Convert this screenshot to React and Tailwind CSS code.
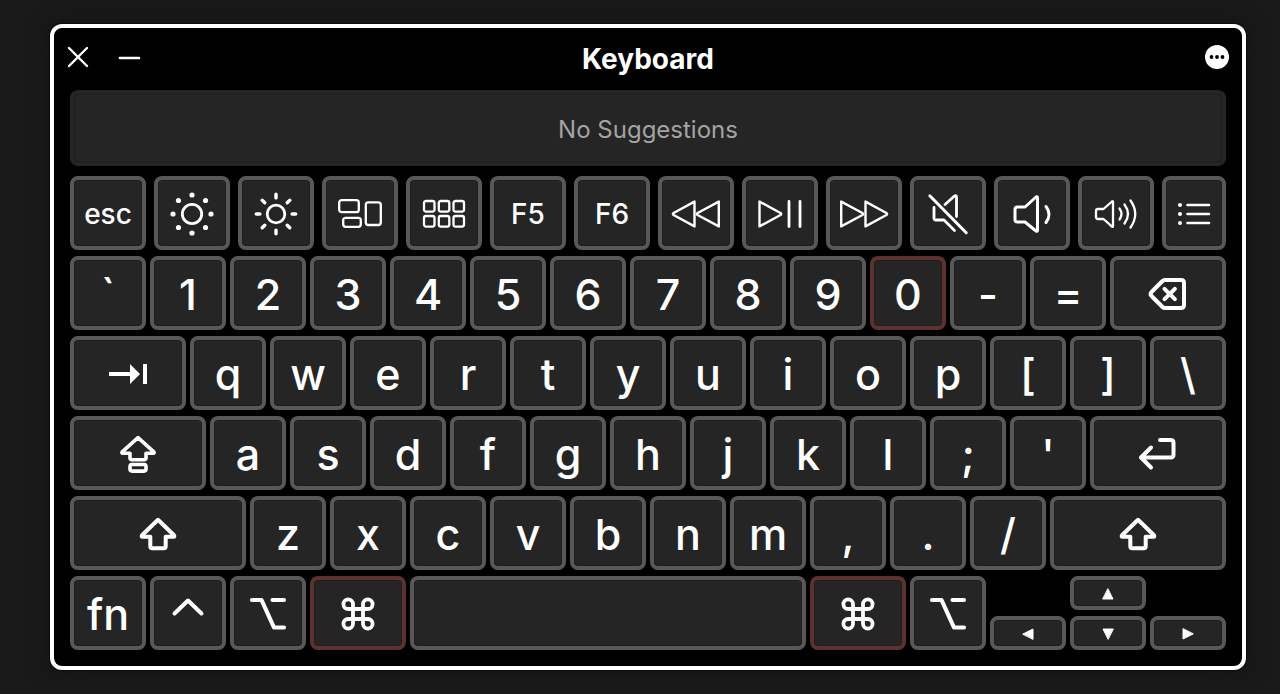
import React from 'react';
import clsx from 'clsx';

// Every icon is drawn in the pixel box of the key face it sits on
const Icon = ({ w, h, stroke = 2.3, className, children }) => (
  <svg
    width={w}
    height={h}
    viewBox={`0 0 ${w} ${h}`}
    fill="none"
    stroke="currentColor"
    strokeWidth={stroke}
    strokeLinecap="round"
    strokeLinejoin="round"
    aria-hidden="true"
    className={clsx('block shrink-0 overflow-visible', className)}
  >
    {children}
  </svg>
);

const BrightnessDownIcon = () => (
  <Icon w={44} h={44} stroke={2.8}>
    <circle cx="22" cy="22" r="9.7" />
    <g fill="currentColor" stroke="none">
      <circle cx="22" cy="3" r="2.6" />
      <circle cx="22" cy="41" r="2.6" />
      <circle cx="3" cy="22" r="2.6" />
      <circle cx="41" cy="22" r="2.6" />
      <circle cx="8.5" cy="8.5" r="2.6" />
      <circle cx="35.5" cy="8.5" r="2.6" />
      <circle cx="8.5" cy="35.5" r="2.6" />
      <circle cx="35.5" cy="35.5" r="2.6" />
    </g>
  </Icon>
);

const BrightnessUpIcon = () => (
  <Icon w={44} h={44} stroke={2.8}>
    <circle cx="22" cy="22" r="8.8" />
    <path
      strokeWidth="3.4"
      d="M22 2.3v3.6M22 38.1v3.6M2.3 22h3.6M38.1 22h3.6M8.2 8.2l2.6 2.6M33.2 33.2l2.6 2.6M8.2 35.8l2.6-2.6M33.2 10.8l2.6-2.6"
    />
  </Icon>
);

const MissionControlIcon = () => (
  <Icon w={44} h={30}>
    <rect x="1.2" y="1.2" width="19.6" height="12" rx="2.5" />
    <rect x="5.2" y="18.8" width="17.6" height="9" rx="2.5" />
    <rect x="27.8" y="3.4" width="15" height="22.6" rx="2.5" />
  </Icon>
);

const LaunchpadIcon = () => (
  <Icon w={42} h={28}>
    {[1, 15.8, 30.5].map((x) => (
      <g key={x}>
        <rect x={x} y="1" width="10.5" height="10.6" rx="2" />
        <rect x={x} y="16" width="10.5" height="10.6" rx="2" />
      </g>
    ))}
  </Icon>
);

const RewindIcon = () => (
  <Icon w={48} h={28} stroke={2.4}>
    <path d="M22.5 1.6v24.8L1.6 15c-.9-.5-.9-1.5 0-2z" />
    <path d="M46.8 1.6v24.8L25.6 15c-.9-.5-.9-1.5 0-2z" />
  </Icon>
);

const PlayPauseIcon = () => (
  <Icon w={44} h={28} stroke={2.4}>
    <path d="M1.5 1.6v24.8L22.5 15c.9-.5.9-1.5 0-2z" />
    <path d="M31 1.5v25M42 1.5v25" strokeWidth="2.8" />
  </Icon>
);

const ForwardIcon = () => (
  <Icon w={48} h={28} stroke={2.4}>
    <path d="M1.2 1.6v24.8L22.4 15c.9-.5.9-1.5 0-2z" />
    <path d="M25.5 1.6v24.8L46.4 15c.9-.5.9-1.5 0-2z" />
  </Icon>
);

const MuteIcon = () => (
  <Icon w={40} h={40} stroke={2.8}>
    <path d="M1.8 1.8l36.4 37" strokeWidth="3" />
    <path d="M6 13.5v10.5q0 2 2 2h8L26.5 36.5" />
    <path d="M17 10.5L26.500 2q2-1 2 1V22.500" />
  </Icon>
);

const VolumeDownIcon = () => (
  <Icon w={38} h={40} stroke={3}>
    <path d="M4.5 13H12L23 3q1.500-1 1.500 1v32q0 2-1.500 1L12 28H4.500q-2.500 0-2.500-2.500v-10Q2 13 4.500 13z" />
    <path d="M33 12.500q6 8 0 16" />
  </Icon>
);

const VolumeUpIcon = () => (
  <Icon w={42} h={30}>
    <path d="M3 10h5.500L17 2.500q1-.7 1 .6v24q0 1.300-1 .6L8.500 20H3q-2 0-2-2v-6Q1 10 3 10z" />
    <path d="M24.500 9.500q4 5.500 0 11M29.500 5.500q7 9.500 0 19M35.500 1.500q9.500 13.500 0 27" />
  </Icon>
);

const ListIcon = () => (
  <Icon w={32} h={24} stroke={2.6}>
    <path d="M9.500 3h21.500M9.500 12h21.500M9.500 21h21.500" />
    <g fill="currentColor" stroke="none">
      <circle cx="2" cy="3" r="2" />
      <circle cx="2" cy="12" r="2" />
      <circle cx="2" cy="21" r="2" />
    </g>
  </Icon>
);

const DeleteIcon = () => (
  <Icon w={40} h={34} stroke={4}>
    <path d="M17 3h16q3 0 3 3v22q0 3-3 3H17q-1.500 0-2.500-1L3.500 19q-1.800-2 0-4L14.500 4q1-1 2.500-1z" />
    <path d="M16.500 11.800l10.400 10.400M26.900 11.800l-10.400 10.400" />
  </Icon>
);

const TabIcon = () => (
  <Icon w={38} h={20}>
    <path d="M0 8h21V0l10 10-10 10v-8H0zM34 0h4v20h-4z" fill="currentColor" stroke="none" />
  </Icon>
);

const CapsLockIcon = () => (
  <Icon w={38} h={38} stroke={3.6}>
    <path d="M19 2.600L3.200 16.800q-.9 1.500 .6 1.500H11v4.400q0 2 2 2h12q2 0 2-2v-4.400h7.200q1.500 0 .6-1.500z" />
    <rect x="11" y="29.500" width="16" height="6.600" rx="2" />
  </Icon>
);

const ShiftIcon = () => (
  <Icon w={38} h={34} stroke={4}>
    <path d="M19 2.800L3 18.300q-.9 1.500 .6 1.500H11.300v9.500q0 2 2 2h11.400q2 0 2-2v-9.500h7.700q1.500 0 .6-1.500z" />
  </Icon>
);

const ReturnIcon = () => (
  <Icon w={40} h={34} stroke={4}>
    <path d="M22 3H32.500q3 0 3 3v11.500q0 3-3 3H3M13 10.500L3 20.500l10 10" />
  </Icon>
);

const ControlIcon = () => (
  <Icon w={32} h={18} stroke={4}>
    <path d="M2.500 15.500L16 2.500l13.500 13" />
  </Icon>
);

const OptionIcon = () => (
  <Icon w={36} h={34} stroke={4.2}>
    <path d="M2 3h9.500L24 30.500h10M22.500 3h11.500" />
  </Icon>
);

const CommandIcon = () => (
  <Icon w={34} h={34} stroke={3.8}>
    <path d="M12 12V7.200a4.800 4.800 0 1 0-4.800 4.800h19.600a4.800 4.800 0 1 0-4.800-4.800v19.600a4.800 4.800 0 1 0 4.800-4.800H7.200a4.800 4.800 0 1 0 4.800 4.800z" />
  </Icon>
);

const ArrowIcon = ({ className }) => (
  <Icon w={12} h={12} stroke={1} className={className}>
    <path d="M6 1l5 10H1z" fill="currentColor" />
  </Icon>
);

const functionKeys = [
  { name: 'esc', face: 'esc' },
  { name: 'Brightness down', face: <BrightnessDownIcon /> },
  { name: 'Brightness up', face: <BrightnessUpIcon /> },
  { name: 'Mission Control', face: <MissionControlIcon /> },
  { name: 'Launchpad', face: <LaunchpadIcon /> },
  { name: 'F5', face: 'F5' },
  { name: 'F6', face: 'F6' },
  { name: 'Rewind', face: <RewindIcon /> },
  { name: 'Play or pause', face: <PlayPauseIcon /> },
  { name: 'Fast forward', face: <ForwardIcon /> },
  { name: 'Mute', face: <MuteIcon /> },
  { name: 'Volume down', face: <VolumeDownIcon /> },
  { name: 'Volume up', face: <VolumeUpIcon /> },
  { name: 'Key list', face: <ListIcon /> },
];

const chars = (text) => text.split('').map((c) => ({ name: c, face: c, hot: c === '0' }));

// A plain key spans 4 of the 58 columns
const rows = [
  [...chars('`1234567890-='), { name: 'Delete', face: <DeleteIcon />, size: 'col-span-6' }],
  [{ name: 'Tab', face: <TabIcon />, size: 'col-span-6' }, ...chars('qwertyuiop[]\\')],
  [
    { name: 'Caps Lock', face: <CapsLockIcon />, size: 'col-span-7' },
    ...chars("asdfghjkl;'"),
    { name: 'Return', face: <ReturnIcon />, size: 'col-span-7' },
  ],
  [
    { name: 'Left Shift', face: <ShiftIcon />, size: 'col-span-9' },
    ...chars('zxcvbnm,./'),
    { name: 'Right Shift', face: <ShiftIcon />, size: 'col-span-9' },
  ],
];

const bottomRow = [
  { name: 'fn', face: 'fn' },
  { name: 'Control', face: <ControlIcon />, pad: 'pb-3' },
  { name: 'Left Option', face: <OptionIcon /> },
  { name: 'Left Command', face: <CommandIcon />, size: 'col-span-5', hot: true },
  { name: 'Space', face: null, size: 'col-span-20' },
  { name: 'Right Command', face: <CommandIcon />, size: 'col-span-5', hot: true },
  { name: 'Right Option', face: <OptionIcon /> },
];

const Key = ({ name, face, size = 'col-span-4', height = 'h-[74px]', text = 'text-[43px]', pad = 'pt-0.5', hot }) => (
  <button
    type="button"
    aria-label={name}
    className={clsx(
      'flex min-w-0 items-center justify-center rounded-lg border-4 bg-[#252525] font-medium leading-none text-white shadow-[inset_0_0_0_1px_#1e1e1e]',
      hot ? 'border-[#5e3131]' : 'border-[#585858]',
      pad,
      size,
      height,
      text
    )}
  >
    {face}
  </button>
);

const Row = ({ children }) => (
  <div className="grid grid-cols-[repeat(58,minmax(0,1fr))] gap-x-1">{children}</div>
);

const ArrowKeys = () => (
  <div className="col-span-12 grid grid-cols-3 gap-x-1 gap-y-1.5">
    <Key name="Up" face={<ArrowIcon />} size="col-start-2" height="h-[34px]" />
    <Key name="Left" face={<ArrowIcon className="-rotate-90" />} size="col-start-1" height="h-[34px]" />
    <Key name="Down" face={<ArrowIcon className="rotate-180" />} size="col-start-2" height="h-[34px]" />
    <Key name="Right" face={<ArrowIcon className="rotate-90" />} size="col-start-3" height="h-[34px]" />
  </div>
);

const TitleBar = () => (
  <header className="grid h-[62px] grid-cols-[1fr_auto_1fr] items-center text-white">
    <div className="flex items-center gap-7 pb-1">
      <button type="button" aria-label="Close" className="-ml-1 p-0.5">
        <Icon w={20} h={20} stroke={2.4}>
          <path d="M1 1l18 18M19 1L1 19" />
        </Icon>
      </button>
      <button type="button" aria-label="Minimize">
        <Icon w={22} h={20} stroke={2.6}>
          <path d="M2 11h19" />
        </Icon>
      </button>
    </div>
    <h1 className="text-[28px] font-bold leading-none">Keyboard</h1>
    <button type="button" aria-label="More options" className="-mr-[3px] justify-self-end pb-1">
      <Icon w={24} h={24}>
        <circle cx="12" cy="12" r="12" fill="#fff" stroke="none" />
        <g fill="#000" stroke="none">
          <circle cx="6.5" cy="12" r="1.9" />
          <circle cx="12" cy="12" r="1.9" />
          <circle cx="17.5" cy="12" r="1.9" />
        </g>
      </Icon>
    </button>
  </header>
);

export default function App() {
  return (
    <div className="min-h-screen bg-[#1a1a1a] py-6 pr-[34px] pl-[50px] font-['Inter',sans-serif]">
      <main className="rounded-xl border-4 border-white bg-black px-4 pb-4 shadow-[0_0_0_1px_#0c0c0c,0_0_24px_#111111]">
        <TitleBar />
        <div className="mb-2.5 rounded-lg bg-[#252525] p-1">
          <p className="flex h-[68px] items-center justify-center rounded border border-[#1e1e1e] pt-1 text-2xl text-[#a3a3a3]">
            No Suggestions
          </p>
        </div>
        <div className="flex flex-col gap-1.5">
          <div className="grid grid-cols-[repeat(13,minmax(0,19fr))_minmax(0,16fr)] gap-x-2">
            {functionKeys.map((k) => (
              <Key key={k.name} size="col-span-1" text="text-[28px]" {...k} />
            ))}
          </div>
          {rows.map((row, i) => (
            <Row key={i}>
              {row.map((k) => (
                <Key key={k.name} {...k} />
              ))}
            </Row>
          ))}
          <Row>
            {bottomRow.map((k) => (
              <Key key={k.name} {...k} />
            ))}
            <ArrowKeys />
          </Row>
        </div>
      </main>
    </div>
  );
}
